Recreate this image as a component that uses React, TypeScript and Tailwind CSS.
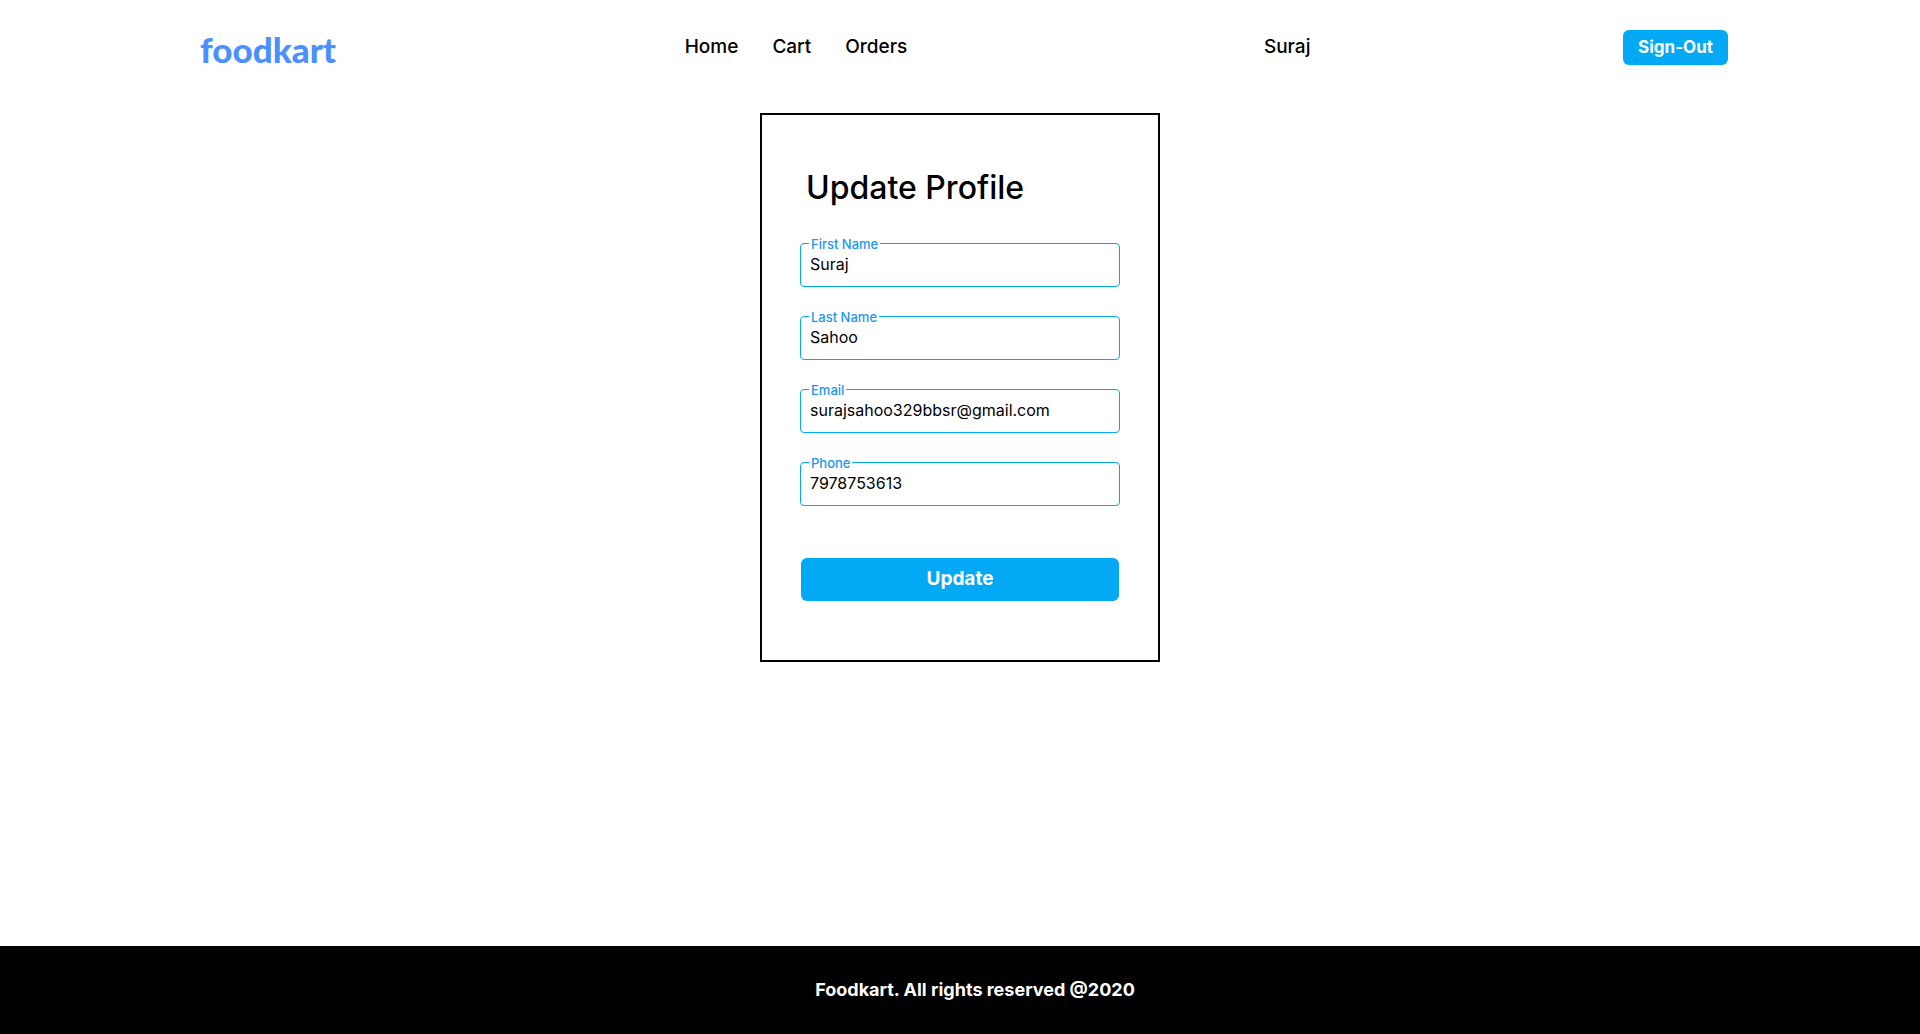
const fields = [
  { id: "firstName", label: "First Name", type: "text", value: "Suraj" },
  { id: "lastName", label: "Last Name", type: "text", value: "Sahoo" },
  { id: "email", label: "Email", type: "email", value: "surajsahoo329bbsr@gmail.com" },
  { id: "phone", label: "Phone", type: "tel", value: "7978753613" },
];

function Header() {
  return (
    <header className="flex h-[94px] items-center justify-between pl-[200px] pr-48">
      <a href="#" className="pt-1 font-['Lato',sans-serif] text-[35px] leading-[48px] font-black text-[#4a90ff]">
        foodkart
      </a>
      <nav className="flex gap-[34px] pl-9 text-[19px] leading-7 font-medium">
        <a href="#">Home</a>
        <a href="#">Cart</a>
        <a href="#">Orders</a>
      </nav>
      <a href="#" className="pl-11 text-[19px] leading-7 font-medium">Suraj</a>
      <button type="button" className="h-[35px] rounded-md bg-[#03a9f4] px-[15px] pt-0.5 text-[17px] font-bold text-white">
        Sign-Out
      </button>
    </header>
  );
}

function Field({ id, label, type, value }: (typeof fields)[number]) {
  return (
    <div className="relative">
      <label htmlFor={id} className="absolute -top-[7px] left-[9px] bg-white px-0.5 text-[13px] leading-4 font-medium text-[#2196f3]">
        {label}
      </label>
      <input
        id={id}
        type={type}
        defaultValue={value}
        className="block h-11 w-full rounded border border-[#03a9f4] px-[9px] pb-0.5 text-base text-black outline-none"
      />
    </div>
  );
}

export default function App() {
  return (
    <div className="flex min-h-screen flex-col bg-white font-['Inter',sans-serif] text-black">
      <Header />
      <main className="flex-1 pt-[19px]">
        <form className="mx-auto w-full max-w-[400px] border-2 border-black px-[38px] pt-[49px] pb-[59px]">
          <h1 className="pl-1.5 text-[32px] leading-[48px] font-medium">Update Profile</h1>
          <div className="flex flex-col gap-[29px] pt-[31px]">
            {fields.map((field) => (
              <Field key={field.id} {...field} />
            ))}
          </div>
          <div className="px-px pt-[52px]">
            <button type="submit" className="h-[43px] w-full rounded-md bg-[#03a9f4] text-[19px] font-bold text-white">
              Update
            </button>
          </div>
        </form>
      </main>
      <footer className="bg-black py-[30px] pl-[30px] text-center text-lg font-bold text-white">
        Foodkart. All rights reserved @2020
      </footer>
    </div>
  );
}
